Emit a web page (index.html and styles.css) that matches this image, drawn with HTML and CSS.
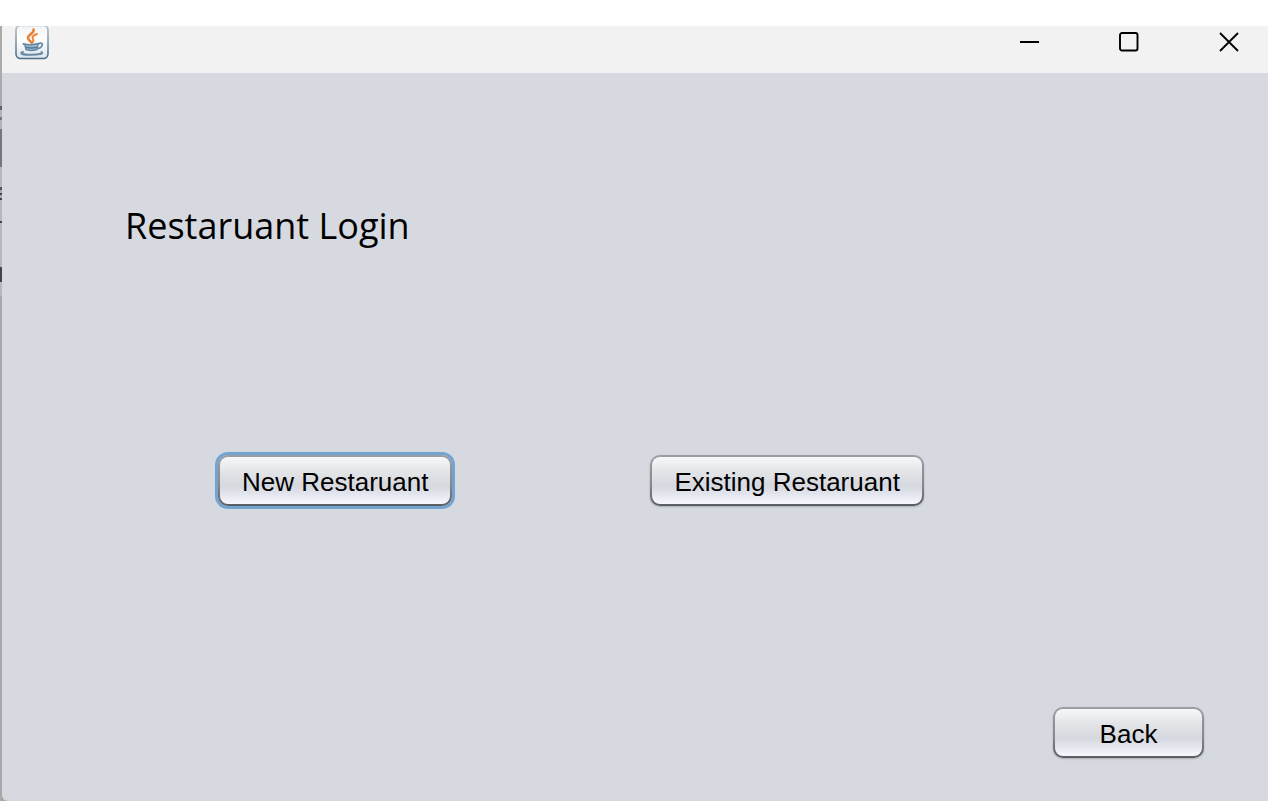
FILE: index.html
```html
<!DOCTYPE html>
<html lang="en">
<head>
<meta charset="utf-8">
<meta name="viewport" content="width=device-width, initial-scale=1">
<title>Restaruant Login</title>
<link rel="stylesheet" href="styles.css">
</head>
<body>
<div class="desktop">
  <div class="window">
    <header class="titlebar">
      <svg class="app-icon" viewBox="0 0 34 34" aria-hidden="true">
        <defs>
          <linearGradient id="tile" x1="0" y1="0" x2="0" y2="1">
            <stop offset="0" stop-color="#f2f3f4"/><stop offset=".45" stop-color="#ffffff"/><stop offset="1" stop-color="#dde3e8"/>
          </linearGradient>
          <linearGradient id="rim" x1="0" y1="0" x2="0" y2="1">
            <stop offset="0" stop-color="#b4bec6"/><stop offset="1" stop-color="#486f8c"/>
          </linearGradient>
        </defs>
        <rect x="1" y="-.5" width="32" height="33" rx="4.500" fill="url(#tile)" stroke="url(#rim)" stroke-width="1.600"/>
        <g fill="none" stroke="#e98238" stroke-linecap="round">
          <path d="M18.500 3.500C20 7 12.500 8.800 13 12C13.300 14 15 15 16.500 16.500" stroke-width="2.600"/>
          <path d="M22 8C18 9.500 16.500 11 18 13C19 14.500 18.300 15.500 17.300 16.500" stroke-width="1.900"/>
        </g>
        <g fill="none" stroke="#648aa7" stroke-linecap="round">
          <path d="M8.500 18Q15 20 23.500 17.800" stroke-width="2"/>
          <path d="M24 17.500C28.500 16 28.500 20.500 23.500 22.500" stroke-width="1.700"/>
          <path d="M10 19.500L11 23.500Q16.500 25.500 22 23.500L23 19.500" fill="#9db5c7" stroke-width="1.400"/>
          <path d="M11.500 21.500Q17 22.500 22 21.300" stroke="#527b9a" stroke-width="1.400"/>
          <path d="M8 26C3.500 27.500 8 28.800 16 28.800C23 28.800 29 27.800 26.500 26" stroke-width="2"/>
        </g>
      </svg>
      <div class="window-controls">
        <button class="control" type="button" aria-label="Minimize">
          <svg viewBox="0 0 20 20"><path d="M1 10H20" stroke-width="2"/></svg>
        </button>
        <button class="control" type="button" aria-label="Maximize">
          <svg viewBox="0 0 20 20"><rect x="1" y="1" width="17.500" height="17.500" rx="2" stroke-width="1.900"/></svg>
        </button>
        <button class="control" type="button" aria-label="Close">
          <svg viewBox="0 0 20 20"><path d="M1 1L19 19M19 1L1 19" stroke-width="1.800"/></svg>
        </button>
      </div>
    </header>
    <main class="content">
      <h1 class="title">Restaruant Login</h1>
      <div class="choices">
        <button class="button button-focused" type="button">New Restaruant</button>
        <button class="button" type="button">Existing Restaruant</button>
      </div>
      <div class="footer">
        <button class="button button-back" type="button">Back</button>
      </div>
    </main>
  </div>
</div>
</body>
</html>
```
FILE: styles.css
```css
* { box-sizing: border-box; }

body {
  margin: 0;
  background: #fff;
  color: #000;
  font-family: "Liberation Sans", Arial, sans-serif;
}

.desktop {
  display: flex;
  min-height: 100vh;
  padding: 26px 14px 9px 0;
}

/* Sliver of the window behind, along the left edge */
.window {
  flex: 1;
  display: flex;
  flex-direction: column;
  padding-left: 2px;
  background: linear-gradient(#aaa 80px, #666 80px 84px, #b4b4b4 84px 91px, #777 91px 94px, #b4b4b4 94px 103px, #777 103px 141px, #b8b8b8 141px 161px, #555 161px 164px, #aaa 164px 167px, #444 167px 169px, #aaa 169px 172px, #444 172px 174px, #b8b8b8 174px 195px, #444 195px 197px, #b8b8b8 197px 241px, #444 241px 256px, #b8b8b8 256px 270px, #a8a8a8 270px);
}

.titlebar {
  display: flex;
  justify-content: space-between;
  align-items: flex-start;
  height: 47px;
  padding-left: 13px;
  background: #f3f2f3;
}

.app-icon {
  display: block;
  width: 34px;
  height: 34px;
}

.window-controls {
  display: flex;
  gap: 20px;
}

.control {
  display: grid;
  place-items: center;
  width: 80px;
  height: 32px;
  padding: 0 0 0 1px;
  border: 0;
  background: none;
}

.control svg {
  width: 20px;
  height: 20px;
  fill: none;
  stroke: #000;
}

.content {
  flex: 1;
  display: flex;
  flex-direction: column;
  padding: 127px 64px 43px 123px;
  background: #d6d9e0;
  border-bottom-left-radius: 6px;
}

.title {
  margin: 0;
  font: 400 36px/52px "Open Sans", "Segoe UI", sans-serif;
}

.choices {
  display: flex;
  flex-wrap: wrap;
  gap: 24px 198px;
  padding: 203px 0 24px 93px;
}

.footer {
  display: flex;
  justify-content: flex-end;
  margin-top: auto;
}

.button {
  height: 51px;
  padding: 2px 22px 0;
  border: 2px solid transparent;
  border-radius: 10px;
  background:
    linear-gradient(#f7f8f9, #e4e5e8 30%, #d5d8de 62%, #e2e5ee 78%, #f6f8fd) padding-box,
    linear-gradient(#9b9ea3, #85878b 60%, #595c61) border-box;
  box-shadow: 0 1px 2px #a9acb2;
  color: #000;
  font: 26px/30px "Liberation Sans", Arial, sans-serif;
  white-space: nowrap;
}

.button-focused {
  box-shadow: 0 0 0 3px #73a4d1;
}

.button-back {
  width: 151px;
}
```
